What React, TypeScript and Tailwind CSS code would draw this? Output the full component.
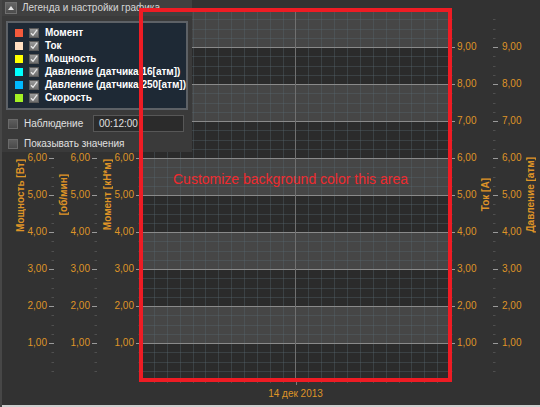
import React from 'react'

// plot: 309 x 370, 10 units of 37px, 4 minor steps per unit, 24 vertical divisions
const PLOT_W = 309
const PLOT_H = 370
const UNIT = 37
const LABELS = ['9,00', '8,00', '7,00', '6,00', '5,00', '4,00', '3,00', '2,00', '1,00']

const SERIES = [
  { name: 'Момент', color: '#f25a3c' },
  { name: 'Ток', color: '#ffdfc2' },
  { name: 'Мощность', color: '#ffff00' },
  { name: 'Давление (датчика 16[атм])', color: '#00ffff' },
  { name: 'Давление (датчика 250[атм])', color: '#00b8ff' },
  { name: 'Скорость', color: '#a4f024' },
]

function Ticks({ side }: { side: 'left' | 'right' }) {
  const items = []
  for (let i = 1; i < 40; i++) {
    const y = Math.round(i * (UNIT / 4)) + 0.5
    const major = i % 4 === 0
    const len = major ? 5 : 2.5
    const x1 = side === 'left' ? 6 - len : 0
    items.push(
      <line key={i} x1={x1} x2={x1 + len} y1={y} y2={y} stroke={major ? '#9a9a9a' : '#4f4f4f'} strokeWidth={1} />
    )
  }
  return (
    <svg width={6} height={PLOT_H} className="shrink-0">
      {items}
    </svg>
  )
}

// hidden: how many of the top labels sit under the legend panel
function Labels({ align, hidden = 0 }: { align: 'left' | 'right'; hidden?: number }) {
  return (
    <div className={`flex flex-col pt-[18.5px] ${align === 'right' ? 'items-end pr-[1px]' : 'items-start'}`}>
      {LABELS.map((l, i) => (
        <div key={l} className="h-[37px] flex items-center text-[10px] leading-none text-[#df9427]">
          {i < hidden ? '' : l}
        </div>
      ))}
    </div>
  )
}

function Title({ text, className }: { text: string; className: string }) {
  return (
    <div className={`h-[370px] flex items-center justify-center shrink-0 ${className}`}>
      <span className="[writing-mode:vertical-rl] rotate-180 text-[10px] font-bold leading-none whitespace-nowrap text-[#df9427]">
        {text}
      </span>
    </div>
  )
}

function LeftAxis({ title, titleW, labelW }: { title: string; titleW: string; labelW: string }) {
  return (
    <div className="flex shrink-0">
      <Title text={title} className={titleW} />
      <div className={labelW}>
        <Labels align="right" hidden={3} />
      </div>
      <Ticks side="left" />
    </div>
  )
}

function RightAxis({ title, labelW, titleW, pad }: { title: string; labelW: string; titleW: string; pad: string }) {
  return (
    <div className="flex shrink-0">
      <Ticks side="right" />
      <div className={`${labelW} ${pad}`}>
        <Labels align="left" />
      </div>
      <Title text={title} className={titleW} />
    </div>
  )
}

function Plot() {
  const bands = []
  for (let i = 0; i < 10; i++) {
    bands.push(
      <rect key={'b' + i} x={0} y={i * UNIT} width={PLOT_W} height={UNIT} fill={i % 2 === 0 ? '#464646' : '#2b2b2b'} />
    )
  }
  const minor = []
  for (let i = 1; i < 40; i++) {
    if (i % 4 === 0) continue
    const y = Math.round(i * (UNIT / 4)) + 0.5
    minor.push(<line key={'h' + i} x1={0} x2={PLOT_W} y1={y} y2={y} stroke="#5a6a74" strokeOpacity={0.35} />)
  }
  for (let i = 1; i < 24; i++) {
    if (i === 12) continue
    const x = Math.round(i * (PLOT_W / 24)) + 0.5
    minor.push(<line key={'v' + i} x1={x} x2={x} y1={0} y2={PLOT_H} stroke="#5a6a74" strokeOpacity={0.35} />)
  }
  const major = []
  for (let i = 1; i < 10; i++) {
    major.push(<line key={'m' + i} x1={0} x2={PLOT_W} y1={i * UNIT + 0.5} y2={i * UNIT + 0.5} stroke="#8a8a8a" />)
  }
  return (
    <svg width={PLOT_W} height={PLOT_H} className="shrink-0 block">
      {bands}
      {minor}
      {major}
      <line x1={154.5} x2={154.5} y1={0} y2={PLOT_H} stroke="#707070" />
    </svg>
  )
}

function BottomTicks() {
  const items = []
  for (let i = 1; i < 24; i++) {
    const x = Math.round(i * (PLOT_W / 24)) + 0.5
    const center = i === 12
    items.push(
      <line key={i} x1={x} x2={x} y1={0} y2={center ? 5 : 3} stroke={center ? '#7a7a7a' : '#4f4f4f'} />
    )
  }
  return (
    <svg width={PLOT_W} height={6} className="block">
      {items}
    </svg>
  )
}

function Check() {
  return (
    <div className="w-[10px] h-[10px] bg-gradient-to-b from-[#9a9a9a] to-[#6e6e6e] border border-[#5a5a5a] flex items-center justify-center shrink-0">
      <svg width={8} height={8} viewBox="0 0 8 8">
        <path d="M1 4.2 L3 6.3 L7 0.8" fill="none" stroke="#e8e8e8" strokeWidth={1.3} />
      </svg>
    </div>
  )
}

function EmptyCheck() {
  return <div className="w-[10px] h-[10px] bg-gradient-to-b from-[#5e5e5e] to-[#4a4a4a] border border-[#6a6a6a] shrink-0" />
}

function LegendPanel() {
  return (
    <div className="absolute left-0 top-0 w-[190px] h-[152px] bg-[#3a3a3a] flex flex-col">
      <div className="h-[16px] bg-[#404040] flex items-center pl-[3px] gap-[5px]">
        <div className="w-[12px] h-[12px] bg-gradient-to-b from-[#666] to-[#4c4c4c] border border-[#707070] flex items-center justify-center">
          <svg width={6} height={4} viewBox="0 0 6 4">
            <path d="M0 4 L3 0 L6 4 Z" fill="#e6e6e6" />
          </svg>
        </div>
        <span className="text-[10px] text-[#d6d6d6] whitespace-nowrap leading-none">Легенда и настройки графика</span>
      </div>
      <div className="mx-[4px] mt-[5px] h-[89px] bg-[#1e2935] border-2 border-[#5d6166] pt-[3px] flex flex-col">
        {SERIES.map((s) => (
          <div key={s.name} className="h-[13px] flex items-center pl-[7px]">
            <div className="w-[8px] h-[8px] shrink-0" style={{ background: s.color }} />
            <div className="ml-[6px]">
              <Check />
            </div>
            <span className="ml-[6px] text-[10px] font-bold text-white whitespace-nowrap leading-none">{s.name}</span>
          </div>
        ))}
      </div>
      <div className="mt-[5px] h-[17px] flex items-center pl-[6px]">
        <EmptyCheck />
        <span className="ml-[6px] text-[10px] text-[#e0e0e0] leading-none w-[69px]">Наблюдение</span>
        <div className="w-[91px] h-[17px] bg-[#2b2b2b] border border-[#575757] flex items-center pl-[5px] text-[10px] text-[#e0e0e0] leading-none">
          00:12:00
        </div>
      </div>
      <div className="mt-[5px] h-[14px] flex items-center pl-[6px]">
        <EmptyCheck />
        <span className="ml-[6px] text-[10px] text-[#e0e0e0] leading-none whitespace-nowrap">Показывать значения</span>
      </div>
    </div>
  )
}

export default function App() {
  return (
    <div className="relative w-[540px] h-[407px] overflow-hidden bg-[#323232] border-l-2 border-[#474747] font-['Liberation_Sans',Arial,sans-serif] flex flex-col">
      <div className="flex pt-[10px] pl-[8px]">
        <LeftAxis title="Мощность [Вт]" titleW="w-[22px]" labelW="w-[16px]" />
        <LeftAxis title="[об/мин]" titleW="w-[20px]" labelW="w-[17px]" />
        <LeftAxis title="Момент [кН*м]" titleW="w-[22px]" labelW="w-[16px]" />
        <Plot />
        <RightAxis title="Ток [А]" labelW="w-[22px]" titleW="w-[15px]" pad="pl-[1px]" />
        <RightAxis title="Давление [атм]" labelW="w-[23px]" titleW="w-[18px]" pad="pl-[3px]" />
      </div>
      <div className="ml-[139px] w-[309px] flex flex-col items-center">
        <BottomTicks />
        <span className="mt-[3px] text-[10px] leading-none text-[#df9427] whitespace-nowrap">14 дек 2013</span>
      </div>
      <div className="flex-1" />
      <div className="h-[2px] bg-[#cfcfcf]" />

      <LegendPanel />

      <div className="absolute left-[137px] top-[8px] w-[313px] h-[374px] border-4 border-[#ee1c24] pl-[30px] pt-[155px]">
        <span className="text-[14px] leading-none text-[#ee2a2e] whitespace-nowrap">Customize background color this area</span>
      </div>
    </div>
  )
}
